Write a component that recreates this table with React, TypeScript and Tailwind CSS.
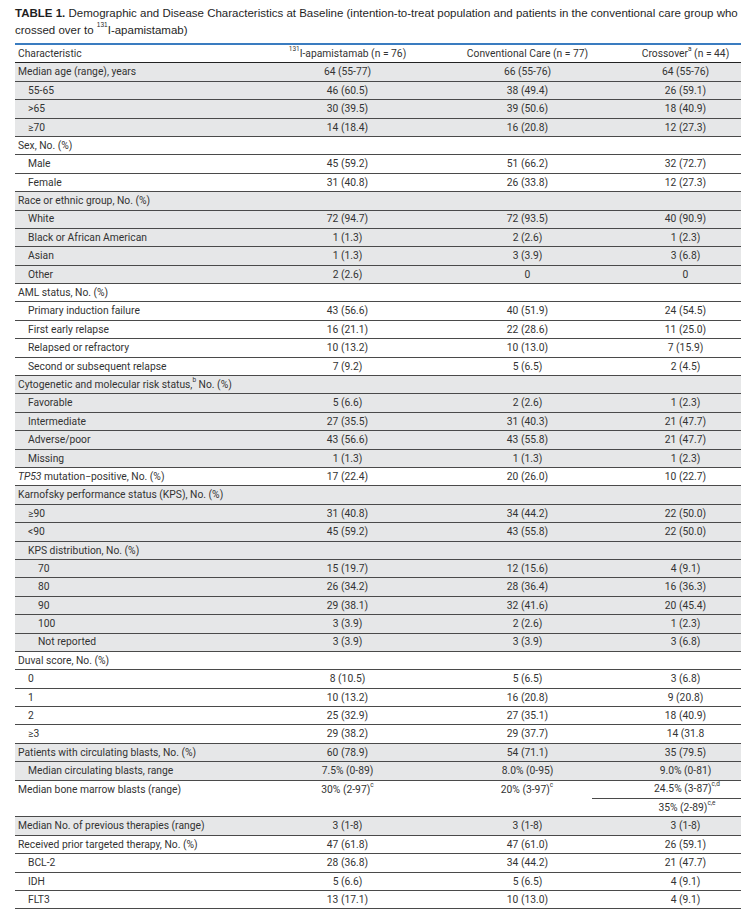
import React from "react";

type Row = {
  label: React.ReactNode;
  v?: [React.ReactNode, React.ReactNode, React.ReactNode];
  level?: 0 | 1 | 2;
};

const Sup = ({ children }: { children: React.ReactNode }) => (
  <span className="text-[6.5px] align-top leading-none">{children}</span>
);

const groups: Row[][] = [
  [
    { label: "Median age (range), years", v: ["64 (55-77)", "66 (55-76)", "64 (55-76)"] },
    { label: "55-65", v: ["46 (60.5)", "38 (49.4)", "26 (59.1)"], level: 1 },
    { label: ">65", v: ["30 (39.5)", "39 (50.6)", "18 (40.9)"], level: 1 },
    { label: "≥70", v: ["14 (18.4)", "16 (20.8)", "12 (27.3)"], level: 1 },
  ],
  [
    { label: "Sex, No. (%)" },
    { label: "Male", v: ["45 (59.2)", "51 (66.2)", "32 (72.7)"], level: 1 },
    { label: "Female", v: ["31 (40.8)", "26 (33.8)", "12 (27.3)"], level: 1 },
  ],
  [
    { label: "Race or ethnic group, No. (%)" },
    { label: "White", v: ["72 (94.7)", "72 (93.5)", "40 (90.9)"], level: 1 },
    { label: "Black or African American", v: ["1 (1.3)", "2 (2.6)", "1 (2.3)"], level: 1 },
    { label: "Asian", v: ["1 (1.3)", "3 (3.9)", "3 (6.8)"], level: 1 },
    { label: "Other", v: ["2 (2.6)", "0", "0"], level: 1 },
  ],
  [
    { label: "AML status, No. (%)" },
    { label: "Primary induction failure", v: ["43 (56.6)", "40 (51.9)", "24 (54.5)"], level: 1 },
    { label: "First early relapse", v: ["16 (21.1)", "22 (28.6)", "11 (25.0)"], level: 1 },
    { label: "Relapsed or refractory", v: ["10 (13.2)", "10 (13.0)", "7 (15.9)"], level: 1 },
    { label: "Second or subsequent relapse", v: ["7 (9.2)", "5 (6.5)", "2 (4.5)"], level: 1 },
  ],
  [
    {
      label: (
        <>
          Cytogenetic and molecular risk status,<Sup>b</Sup> No. (%)
        </>
      ),
    },
    { label: "Favorable", v: ["5 (6.6)", "2 (2.6)", "1 (2.3)"], level: 1 },
    { label: "Intermediate", v: ["27 (35.5)", "31 (40.3)", "21 (47.7)"], level: 1 },
    { label: "Adverse/poor", v: ["43 (56.6)", "43 (55.8)", "21 (47.7)"], level: 1 },
    { label: "Missing", v: ["1 (1.3)", "1 (1.3)", "1 (2.3)"], level: 1 },
  ],
  [
    {
      label: (
        <>
          <i>TP53</i> mutation−positive, No. (%)
        </>
      ),
      v: ["17 (22.4)", "20 (26.0)", "10 (22.7)"],
    },
  ],
  [
    { label: "Karnofsky performance status (KPS), No. (%)" },
    { label: "≥90", v: ["31 (40.8)", "34 (44.2)", "22 (50.0)"], level: 1 },
    { label: "<90", v: ["45 (59.2)", "43 (55.8)", "22 (50.0)"], level: 1 },
    { label: "KPS distribution, No. (%)", level: 1 },
    { label: "70", v: ["15 (19.7)", "12 (15.6)", "4 (9.1)"], level: 2 },
    { label: "80", v: ["26 (34.2)", "28 (36.4)", "16 (36.3)"], level: 2 },
    { label: "90", v: ["29 (38.1)", "32 (41.6)", "20 (45.4)"], level: 2 },
    { label: "100", v: ["3 (3.9)", "2 (2.6)", "1 (2.3)"], level: 2 },
    { label: "Not reported", v: ["3 (3.9)", "3 (3.9)", "3 (6.8)"], level: 2 },
  ],
  [
    { label: "Duval score, No. (%)" },
    { label: "0", v: ["8 (10.5)", "5 (6.5)", "3 (6.8)"], level: 1 },
    { label: "1", v: ["10 (13.2)", "16 (20.8)", "9 (20.8)"], level: 1 },
    { label: "2", v: ["25 (32.9)", "27 (35.1)", "18 (40.9)"], level: 1 },
    { label: "≥3", v: ["29 (38.2)", "29 (37.7)", "14 (31.8"], level: 1 },
  ],
  [
    { label: "Patients with circulating blasts, No. (%)", v: ["60 (78.9)", "54 (71.1)", "35 (79.5)"] },
    { label: "Median circulating blasts, range", v: ["7.5% (0-89)", "8.0% (0-95)", "9.0% (0-81)"], level: 1 },
  ],
];

const after: Row[][] = [
  [{ label: "Median No. of previous therapies (range)", v: ["3 (1-8)", "3 (1-8)", "3 (1-8)"] }],
  [
    { label: "Received prior targeted therapy, No. (%)", v: ["47 (61.8)", "47 (61.0)", "26 (59.1)"] },
    { label: "BCL-2", v: ["28 (36.8)", "34 (44.2)", "21 (47.7)"], level: 1 },
    { label: "IDH", v: ["5 (6.6)", "5 (6.5)", "4 (9.1)"], level: 1 },
    { label: "FLT3", v: ["13 (17.1)", "10 (13.0)", "4 (9.1)"], level: 1 },
  ],
];

const indent = ["pl-[3px]", "pl-[13px]", "pl-[23px]"];

function TableRow({ row, gray }: { row: Row; gray: boolean }) {
  return (
    <div
      className={`flex h-[18.4px] items-center border-b border-[#4a4a4a] ${
        gray ? "bg-[#e6e7e8]" : "bg-white"
      }`}
    >
      <div className={`w-[255px] ${indent[row.level ?? 0]} whitespace-nowrap`}>
        {row.label}
      </div>
      <div className="w-[155px] text-center">{row.v?.[0]}</div>
      <div className="w-[205px] text-center">{row.v?.[1]}</div>
      <div className="w-[111px] text-center">{row.v?.[2]}</div>
    </div>
  );
}

function renderGroups(gs: Row[][], startGray: boolean) {
  return gs.map((g, gi) => {
    const gray = (gi % 2 === 0) === startGray;
    return g.map((r, ri) => (
      <TableRow key={`${gi}-${ri}`} row={r} gray={gray} />
    ));
  });
}

export default function App() {
  return (
    <div className="w-[748px] h-[916px] overflow-hidden bg-white text-[#262626] font-['Roboto',sans-serif]">
      <div className="pl-[15px] pr-[2px] pt-[5px] text-[11.5px] leading-[17px] font-['Liberation_Sans',Arial,sans-serif] text-[#1f1f1f]">
        <span className="font-bold">TABLE 1.</span> Demographic and Disease
        Characteristics at Baseline (intention-to-treat population and patients
        in the conventional care group who crossed over to{" "}
        <Sup>131</Sup>I-apamistamab)
      </div>

      <div className="ml-[15px] w-[726px] mt-[4px] border-t-2 border-[#3a7cc0] text-[10.3px] text-[#333]">
        <div className="flex h-[18.4px] items-center border-b border-[#222]">
          <div className="w-[255px] pl-[3px]">Characteristic</div>
          <div className="w-[155px] text-center">
            <Sup>131</Sup>I-apamistamab (n = 76)
          </div>
          <div className="w-[205px] text-center">Conventional Care (n = 77)</div>
          <div className="w-[111px] text-center">
            Crossover<Sup>a</Sup> (n = 44)
          </div>
        </div>

        {renderGroups(groups, true)}

        <div className="flex h-[36.8px] border-b border-[#4a4a4a] bg-white">
          <div className="w-[255px] pl-[3px] h-[18.4px] flex items-center">
            Median bone marrow blasts (range)
          </div>
          <div className="w-[155px] h-[18.4px] flex items-center justify-center">
            <span>
              30% (2-97)<Sup>c</Sup>
            </span>
          </div>
          <div className="w-[167px] pl-[37px] h-[18.4px] flex items-center justify-center">
            <span>
              20% (3-97)<Sup>c</Sup>
            </span>
          </div>
          <div className="w-[149px] flex flex-col">
            <div className="h-[18.4px] pl-[41px] flex items-center justify-center border-b border-[#4a4a4a]">
              <span>
                24.5% (3-87)<Sup>c,d</Sup>
              </span>
            </div>
            <div className="h-[18.4px] pl-[41px] flex items-center justify-center">
              <span>
                35% (2-89)<Sup>c,e</Sup>
              </span>
            </div>
          </div>
        </div>

        {renderGroups(after, true)}
      </div>
    </div>
  );
}
